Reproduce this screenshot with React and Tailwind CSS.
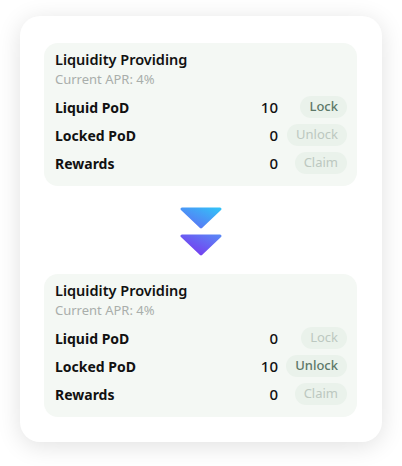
const FONT = { fontFamily: '"Noto Sans", "Open Sans", sans-serif' };

function Row({ label, value, action, active }) {
  return (
    <div className="flex items-center h-[28px]">
      <span className="flex-1 text-[14px] font-bold text-[#111]">{label}</span>
      <span className="text-[15px] font-medium text-[#111] mr-[9px]">{value}</span>
      <div className="w-[60px] flex justify-end">
        <button
          className={
            "h-[22px] px-[9px] rounded-full bg-[#eaf2eb] text-[13px] " +
            (active ? "text-[#5d7868] font-medium" : "text-[#bcc8c0]")
          }
        >
          {action}
        </button>
      </div>
    </div>
  );
}

function Panel({ liquid, locked, lockActive, unlockActive }) {
  return (
    <div className="rounded-[14px] bg-[#f4f8f4] pl-[11px] pr-[10px] pt-[5px] pb-[9px]">
      <div className="text-[14.5px] font-semibold text-[#111] leading-[22px]">Liquidity Providing</div>
      <div className="text-[13px] text-[#a9aeab] leading-[18px] mb-[5px]">Current APR: 4%</div>
      <Row label="Liquid PoD" value={liquid} action="Lock" active={lockActive} />
      <Row label="Locked PoD" value={locked} action="Unlock" active={unlockActive} />
      <Row label="Rewards" value="0" action="Claim" active={false} />
    </div>
  );
}

function Arrows() {
  return (
    <svg width="44" height="50" viewBox="0 0 44 50">
      <defs>
        <linearGradient id="ga" x1="0" y1="1" x2="1" y2="0">
          <stop offset="0" stopColor="#6169f4" />
          <stop offset="1" stopColor="#33c1f8" />
        </linearGradient>
        <linearGradient id="gb" x1="0" y1="1" x2="1" y2="0">
          <stop offset="0" stopColor="#7b30ee" />
          <stop offset="1" stopColor="#5a86f6" />
        </linearGradient>
      </defs>
      <path d="M3 3 L41 3 L22 21 Z" fill="url(#ga)" stroke="url(#ga)" strokeWidth="3" strokeLinejoin="round" />
      <path d="M3 30 L41 30 L22 48 Z" fill="url(#gb)" stroke="url(#gb)" strokeWidth="3" strokeLinejoin="round" />
    </svg>
  );
}

export default function App() {
  return (
    <div className="w-[402px] h-[466px] bg-white pt-[16px] pl-[20px]" style={FONT}>
      <div className="w-[362px] h-[426px] bg-white rounded-[20px] shadow-[0_4px_24px_rgba(0,0,0,0.12)] pt-[27px] pl-[24px] pr-[25px]">
        <Panel liquid="10" locked="0" lockActive unlockActive={false} />
        <div className="flex justify-center pt-[20px] pb-[18px]">
          <Arrows />
        </div>
        <Panel liquid="0" locked="10" lockActive={false} unlockActive />
      </div>
    </div>
  );
}
